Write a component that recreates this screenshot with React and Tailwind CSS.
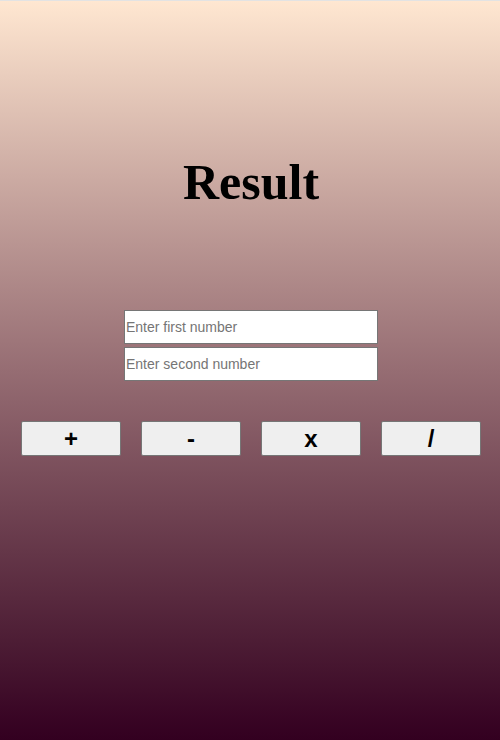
import { useState } from 'react';

const ops = ['+', '-', 'x', '/'];

export default function App() {
  const [a, setA] = useState('');
  const [b, setB] = useState('');
  const [result, setResult] = useState('Result');

  const calc = (op) => {
    const x = parseFloat(a);
    const y = parseFloat(b);
    if (isNaN(x) || isNaN(y)) return;
    const r = op === '+' ? x + y : op === '-' ? x - y : op === 'x' ? x * y : x / y;
    setResult(String(r));
  };

  return (
    <div className="h-[740px] w-full pl-[2px] border-t border-[#e3e3e3] bg-gradient-to-b from-[#ffe7d1] to-[#330020] flex flex-col items-center">
      <h1 className="mt-[153px] text-[50px] leading-[57px] font-bold text-black font-['Liberation_Serif',serif]">
        {result}
      </h1>
      <div className="mt-[99px] flex flex-col gap-[3px]">
        <input
          value={a}
          onChange={(e) => setA(e.target.value)}
          placeholder="Enter first number"
          className="w-[254px] h-[34px] bg-white border border-[#767676] px-[1px] text-[14px] font-['Liberation_Sans',Arial,sans-serif] placeholder:text-[#757575] outline-none"
        />
        <input
          value={b}
          onChange={(e) => setB(e.target.value)}
          placeholder="Enter second number"
          className="w-[254px] h-[34px] bg-white border border-[#767676] px-[1px] text-[14px] font-['Liberation_Sans',Arial,sans-serif] placeholder:text-[#757575] outline-none"
        />
      </div>
      <div className="mt-[40px] flex gap-[20px]">
        {ops.map((op) => (
          <button
            key={op}
            onClick={() => calc(op)}
            className="w-[100px] h-[35px] bg-[#efefef] border border-[#767676] rounded-[2px] text-[24px] leading-none font-bold text-black font-['Liberation_Sans',Arial,sans-serif]"
          >
            {op}
          </button>
        ))}
      </div>
    </div>
  );
}
